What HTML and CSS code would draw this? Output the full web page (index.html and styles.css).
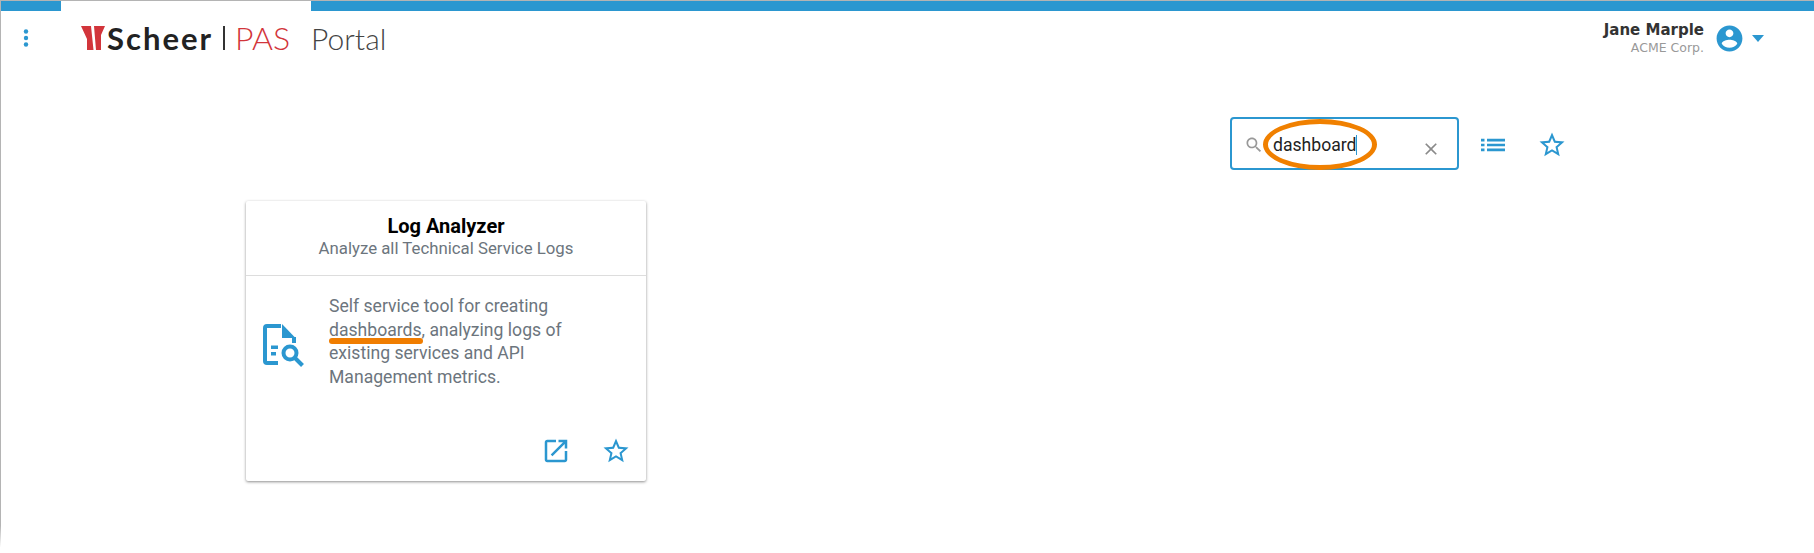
FILE: index.html
```html
<!DOCTYPE html>
<html lang="en">
<head>
    <meta charset="UTF-8">
    <title>Scheer PAS Portal</title>
    <link rel="stylesheet" href="styles.css">
</head>
<body>
    <div class="page">
        <div class="top-stripe">
            <div class="top-tab"></div>
        </div>
        <header class="app-header">
            <svg class="menu-dots" width="8" height="20" viewBox="0 0 8 20"><circle cx="4" cy="3.5" r="2.2"/><circle cx="4" cy="10" r="2.2"/><circle cx="4" cy="16.5" r="2.2"/></svg>
            <div class="brand">
                <svg class="brand-mark" width="24" height="24" viewBox="0 0 24 24"><path d="M0 0H10L12.500 24H6V13Z"/><path d="M13 0H24L20 9V24H15Z"/></svg>
                <span class="brand-name">Scheer</span>
                <span class="brand-sep"></span>
                <span class="brand-pas">PAS</span>
                <span class="brand-portal">Portal</span>
            </div>
            <div class="user-box">
                <div class="user-text">
                    <div class="user-name">Jane Marple</div>
                    <div class="user-org">ACME Corp.</div>
                </div>
                <svg class="icon user-avatar" width="31" height="31" viewBox="0 0 24 24"><path d="M12 2C6.48 2 2 6.48 2 12s4.48 10 10 10 10-4.48 10-10S17.52 2 12 2zm0 3c1.66 0 3 1.34 3 3s-1.34 3-3 3-3-1.34-3-3 1.34-3 3-3zm0 14.2c-2.5 0-4.71-1.28-6-3.22.03-1.99 4-3.08 6-3.08 1.99 0 5.97 1.09 6 3.08-1.29 1.94-3.5 3.22-6 3.22z"/></svg>
                <span class="user-caret"></span>
            </div>
        </header>

        <div class="toolbar">
            <div class="search-box">
                <svg class="search-icon" width="20" height="20" viewBox="0 0 24 24"><path d="M15.5 14h-.79l-.28-.27C15.41 12.59 16 11.11 16 9.5 16 5.91 13.09 3 9.5 3S3 5.91 3 9.5 5.91 16 9.5 16c1.61 0 3.09-.59 4.23-1.57l.27.28v.79l5 4.99L20.49 19l-4.99-5zm-6 0C7.01 14 5 11.99 5 9.5S7.01 5 9.5 5 14 7.01 14 9.5 11.99 14 9.5 14z"/></svg>
                <span class="search-value">dashboard</span>
                <span class="search-caret"></span>
                <svg class="search-clear" width="20" height="20" viewBox="0 0 24 24"><path d="M19 6.41L17.59 5 12 10.59 6.41 5 5 6.41 10.59 12 5 17.59 6.41 19 12 13.41 17.59 19 19 17.59 13.41 12z"/></svg>
                <span class="search-mark"></span>
            </div>
            <svg class="icon list-icon" width="24" height="14" viewBox="0 0 24 14"><path d="M0 .8h3.500v2.600H0zM0 5.700h3.500v2.600H0zM0 10.600h3.500v2.600H0zM6 .8h18v2.600H6zM6 5.700h18v2.600H6zM6 10.600h18v2.600H6z"/></svg>
            <svg class="icon fav-icon" width="30" height="30" viewBox="0 0 24 24"><path d="M22 9.24l-7.19-.62L12 2 9.19 8.63 2 9.24l5.46 4.73L5.82 21 12 17.27 18.18 21l-1.63-7.03L22 9.24zM12 15.4l-3.76 2.27 1-4.28-3.32-2.88 4.38-.38L12 6.1l1.71 4.04 4.38.38-3.32 2.88 1 4.28L12 15.4z"/></svg>
        </div>

        <div class="card-list">
            <div class="card">
                <div class="card-head">
                    <div class="card-title">Log Analyzer</div>
                    <div class="card-subtitle">Analyze all Technical Service Logs</div>
                </div>
                <div class="card-body">
                    <svg class="card-icon" width="41" height="43" viewBox="0 0 41 43">
                        <path class="doc-line" d="M18 2H4Q2 2 2 4V37Q2 39 4 39H15"/>
                        <path class="doc-fill" d="M19 0L32.500 14H19Z"/>
                        <path class="doc-line" d="M31 13V19"/>
                        <path class="doc-fill" d="M8 21.500h7v3.500H8zM8 28h5v3.500H8z"/>
                        <circle class="doc-line" cx="27" cy="29" r="6.500"/>
                        <path class="doc-line" d="M31.500 33.500L39.500 41.500"/>
                    </svg>
                    <p class="card-text">Self service tool for creating <span class="hit">dashboards</span>, analyzing logs of existing services and API Management metrics.</p>
                </div>
                <div class="card-actions">
                    <svg class="icon" width="30" height="30" viewBox="0 0 24 24"><path d="M19 19H5V5h7V3H5c-1.11 0-2 .9-2 2v14c0 1.1.89 2 2 2h14c1.100 0 2-.9 2-2v-7h-2v7zM14 3v2h3.590l-9.830 9.830 1.410 1.410L19 6.410V10h2V3h-7z"/></svg>
                    <svg class="icon" width="30" height="30" viewBox="0 0 24 24"><path d="M22 9.24l-7.19-.62L12 2 9.19 8.63 2 9.24l5.46 4.73L5.82 21 12 17.27 18.18 21l-1.63-7.03L22 9.24zM12 15.4l-3.76 2.27 1-4.28-3.32-2.88 4.38-.38L12 6.1l1.71 4.04 4.38.38-3.32 2.88 1 4.28L12 15.4z"/></svg>
                </div>
            </div>
        </div>
    </div>
</body>
</html>
```

FILE: styles.css
```css
html, body {
    margin: 0;
    padding: 0;
    background-color: #fff;
}
body {
    font-family: 'Roboto', sans-serif;
    overflow: hidden;
}
.page {
    height: 552px;
    border-top: 1px solid #b4b4b4;
    padding-left: 1px;
    background: linear-gradient(#b4b4b4, #b4b4b4 95%, #fff 99%) 0 0 / 1px 100% no-repeat;
}
.icon {
    fill: #2b97d0;
    display: block;
    flex: none;
}

/* top bar */
.top-stripe {
    height: 10px;
    background-color: #2b97d0;
    padding-left: 60px;
}
.top-tab {
    width: 250px;
    height: 10px;
    background-color: #fff;
}
.app-header {
    display: flex;
    align-items: center;
    height: 50px;
    padding: 3px 50px 0 21px;
    box-sizing: border-box;
}
.menu-dots {
    fill: #2b97d0;
}
.brand {
    display: flex;
    align-items: center;
    margin-left: 51px;
    flex: 1;
}
.brand-mark {
    fill: #d2353b;
}
.brand-name {
    font-family: 'Lato', sans-serif;
    font-weight: 700;
    font-size: 31px;
    line-height: 30px;
    letter-spacing: 2px;
    color: #222;
    margin-left: 2px;
}
.brand-sep {
    width: 2px;
    height: 24px;
    background-color: #333;
    margin: 0 10px 0 10px;
}
.brand-pas {
    font-family: 'Lato', sans-serif;
    font-weight: 300;
    font-size: 32px;
    line-height: 30px;
    color: #d2353b;
}
.brand-portal {
    font-family: 'Lato', sans-serif;
    font-weight: 300;
    font-size: 30px;
    line-height: 30px;
    color: #444;
    margin-left: 21px;
}
.user-box {
    display: flex;
    align-items: center;
    padding-top: 2px;
}
.user-text {
    text-align: right;
    margin-right: 10px;
    font-family: 'DejaVu Sans', sans-serif;
}
.user-name {
    font-weight: 700;
    font-size: 15px;
    line-height: 18px;
    color: #333;
}
.user-org {
    font-size: 12.500px;
    line-height: 18px;
    color: #999;
}
.user-caret {
    width: 0;
    height: 0;
    margin-left: 7px;
    border-left: 6.500px solid transparent;
    border-right: 6.500px solid transparent;
    border-top: 7px solid #2b97d0;
}

/* search row */
.toolbar {
    display: flex;
    align-items: center;
    justify-content: flex-end;
    gap: 22px;
    padding: 56px 247px 0 0;
}
.search-box {
    position: relative;
    display: flex;
    align-items: center;
    box-sizing: border-box;
    width: 229px;
    height: 53px;
    border: 2px solid #2b97d0;
    border-radius: 4px;
    padding: 2px 16px 0 12px;
}
.search-icon {
    fill: #999;
    flex: none;
}
.search-value {
    font-size: 17.600px;
    color: #222;
    margin-left: 9px;
}
.search-caret {
    width: 1px;
    height: 20px;
    background-color: #2b97d0;
}
.search-clear {
    fill: #8a8a8a;
    margin: 8px 0 0 auto;
    flex: none;
}
/* orange ring drawn over the field */
.search-mark {
    position: absolute;
    left: 31px;
    top: 0;
    width: 114px;
    height: 51px;
    box-sizing: border-box;
    border: 5.500px solid #f08000;
    border-radius: 50%;
}
.list-icon {
    margin: 2px 10px 0 0;
}
.fav-icon {
    margin-top: 3px;
}

/* card */
.card-list {
    padding: 31px 0 0 245px;
}
.card {
    width: 400px;
    height: 280px;
    display: flex;
    flex-direction: column;
    background-color: #fff;
    border-radius: 2px;
    box-shadow: 0 1px 3px rgba(0,0,0,0.45);
}
.card-head {
    height: 75px;
    box-sizing: border-box;
    padding-top: 13px;
    text-align: center;
    border-bottom: 1px solid #ddd;
}
.card-title {
    font-weight: 700;
    font-size: 20px;
    line-height: 24px;
    color: #000;
}
.card-subtitle {
    font-size: 16.800px;
    line-height: 20px;
    color: #6c757d;
}
.card-body {
    flex: 1;
    display: flex;
    align-items: flex-start;
    padding: 19px 30px 0 17px;
    min-height: 0;
}
.card-icon {
    flex: none;
    margin-top: 29px;
}
.card-text {
    margin: 0 0 0 25px;
    font-size: 17.600px;
    line-height: 23.700px;
    color: #6c757d;
}
.hit {
    position: relative;
}
.hit::after {
    content: '';
    position: absolute;
    left: 0;
    right: -1px;
    bottom: -4px;
    height: 5.500px;
    border-radius: 3px;
    background-color: #f07d00;
}
.doc-line {
    fill: none;
    stroke: #2b97d0;
    stroke-width: 4;
}
.doc-fill {
    fill: #2b97d0;
}
.card-actions {
    display: flex;
    justify-content: flex-end;
    gap: 30px;
    padding: 0 15px 15px 0;
}
```
